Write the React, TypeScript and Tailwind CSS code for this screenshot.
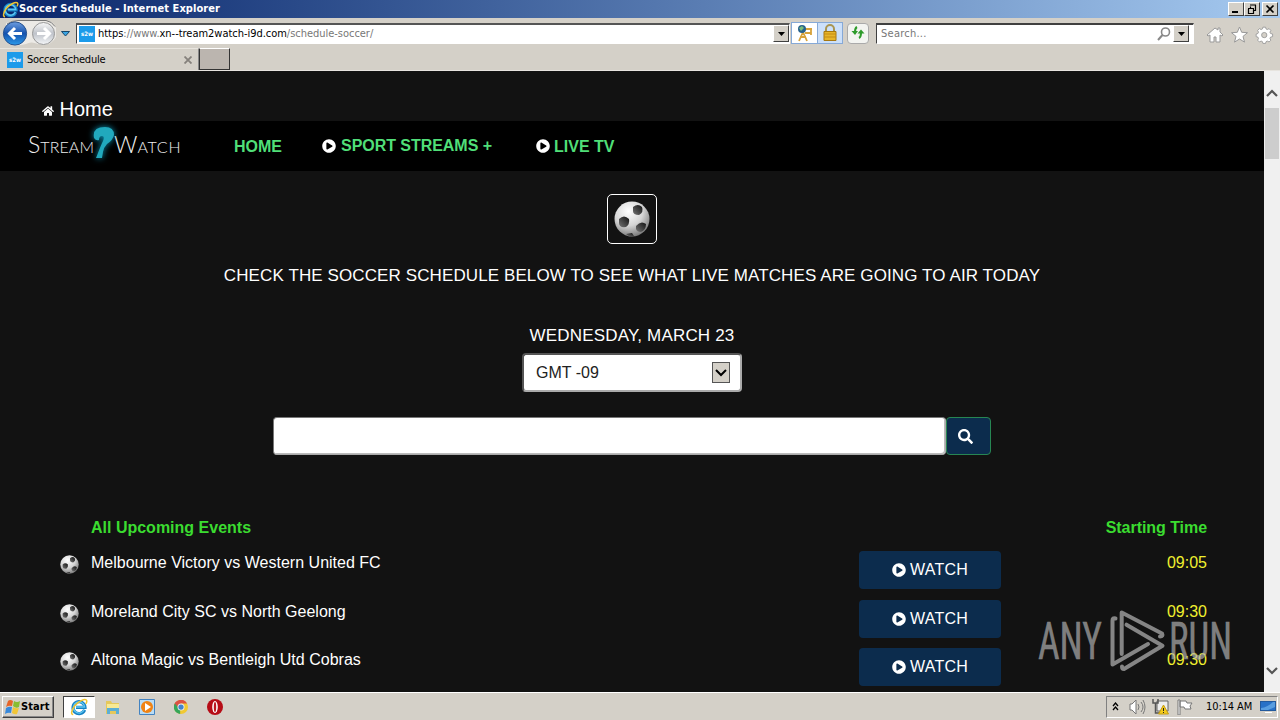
import type { ReactNode } from 'react'
import { FaHome, FaPlayCircle, FaSearch } from 'react-icons/fa'

const EVENTS = [
  { name: 'Melbourne Victory vs Western United FC', time: '09:05' },
  { name: 'Moreland City SC vs North Geelong', time: '09:30' },
  { name: 'Altona Magic vs Bentleigh Utd Cobras', time: '09:30' },
]

function IeLogo({ className }: { className: string }) {
  return (
    <svg viewBox="0 0 18 18" className={className} fill="none">
      <path d="M14.6 11.8A6 6 0 1 1 15 9.4H6" stroke="#1682c4" strokeWidth="3.2" />
      <path d="M14.2 11.6A5.6 5.6 0 1 1 14.6 9H6" stroke="#5fc6f2" strokeWidth="1.4" />
      <path d="M3.2 16.6C.4 16.6 1.6 11.500 5 7.500S14.500.4 16.300 2c.9.9.4 2.400-.5 3.800" stroke="#f0c531" strokeWidth="1.500" />
    </svg>
  )
}

function Favicon() {
  return (
    <span className="flex h-4 w-4 shrink-0 items-center justify-center bg-[#1c9bea] text-[6px] leading-none font-bold text-white">
      s2w
    </span>
  )
}

function SoccerBall({ className, id }: { className: string; id: string }) {
  return (
    <svg viewBox="0 0 36 36" className={className}>
      <defs>
        <radialGradient id={id} cx="40%" cy="28%" r="75%">
          <stop offset="0" stopColor="#fff" />
          <stop offset=".55" stopColor="#d5d5d5" />
          <stop offset="1" stopColor="#777" />
        </radialGradient>
        <linearGradient id={`${id}-patch`} x1="1" y1="0" x2="0" y2="1">
          <stop offset="0" stopColor="#111" />
          <stop offset="1" stopColor="#747474" />
        </linearGradient>
      </defs>
      <circle cx="18" cy="18" r="17.500" fill={`url(#${id})`} />
      <g fill={`url(#${id}-patch)`}>
        <path d="M19 6q5-4 9 0 2 5-3 8-6 0-6-4z" />
        <path d="M5 18q5-5 10 0 1 5-3 8-7 1-7-4z" />
        <path d="M22 25q5-6 10-2 0 6-5 8-4 0-5-3z" />
        <path d="M12 33l6-1 2 3-5 .4z" />
      </g>
    </svg>
  )
}

function DropArrow() {
  return (
    <span className="flex h-[17px] w-4 shrink-0 items-center justify-center border border-t-white border-r-[#404040] border-b-[#404040] border-l-white bg-[#d4d0c8]">
      <svg viewBox="0 0 7 4" className="h-1 w-[7px]">
        <path d="M0 0h7L3.500 4z" fill="#000" />
      </svg>
    </span>
  )
}

function WindowButton({ children }: { children: ReactNode }) {
  return (
    <span className="h-3.5 w-4 border border-t-white border-r-[#404040] border-b-[#404040] border-l-white bg-[#d4d0c8]">
      <svg viewBox="0 0 14 12" className="h-3 w-3.5" fill="none" stroke="#000">
        {children}
      </svg>
    </span>
  )
}

function TitleBar() {
  return (
    <div className="flex h-[18px] items-center bg-linear-to-r from-[#0a246a] to-[#a6caf0] pr-0.5 pl-0.5">
      <IeLogo className="h-[17px] w-[17px]" />
      <span className="mt-px text-[11px] font-bold tracking-[0.07px] text-white">Soccer Schedule - Internet Explorer</span>
      <div className="ml-auto flex">
        <WindowButton><path d="M3 9h6" strokeWidth="2" /></WindowButton>
        <WindowButton>
          <path d="M5 2h6M5.500 3.500V5M10.500 2v5.500H9M3 5.500h6M3.500 6v4.500h5V6" strokeWidth="1.200" />
        </WindowButton>
        <span className="w-0.5" />
        <WindowButton><path d="M3.500 2.500l7 7M10.500 2.500l-7 7" strokeWidth="1.700" /></WindowButton>
      </div>
    </div>
  )
}

function NavCircles() {
  return (
    <svg viewBox="0 0 74 30" className="h-[30px] w-[74px] shrink-0" fill="none">
      <defs>
        <linearGradient id="back" x1="0" y1="0" x2="0" y2="1">
          <stop offset="0" stopColor="#6d9de0" />
          <stop offset=".5" stopColor="#1552ae" />
          <stop offset="1" stopColor="#2c9bea" />
        </linearGradient>
        <linearGradient id="forward" x1="0" y1="0" x2="0" y2="1">
          <stop offset="0" stopColor="#f8f8f8" />
          <stop offset=".5" stopColor="#bfc3ca" />
          <stop offset="1" stopColor="#f4f6f8" />
        </linearGradient>
      </defs>
      <path d="M4 5Q14 1 24 3h22q6 1 8 7v9q-5 10-18 7-7-3-12 0Q9 30 4 23z" fill="#eceae6" />
      <path d="M5 6Q10 2.500 16 2.500h28q6 1 9 6" stroke="#777" />
      <circle cx="13" cy="15.500" r="11.600" fill="url(#back)" stroke="#26518f" />
      <path d="M20 15.500H8M13 10l-5.500 5.500L13 21" stroke="#fff" strokeWidth="3" />
      <circle cx="41.500" cy="15.500" r="11" fill="url(#forward)" stroke="#989898" />
      <path d="M35 15.500h12M42 10l5.500 5.500L42 21" stroke="#fff" strokeWidth="3" />
      <path d="M59.500 13.500h8L63.500 18z" fill="#3aa5e3" stroke="#17486c" />
    </svg>
  )
}

function AddressRow() {
  return (
    <div className="flex h-[30px] items-center pl-0.5">
      <NavCircles />
      <div className="flex h-[21px] w-[714px] shrink-0 items-center border border-t-2 border-t-[#555] border-r-white border-b-white border-l-[#404040] bg-white pl-0.5">
        <Favicon />
        <span className="mt-0.5 ml-[3px] text-[11px] tracking-[-0.03px] whitespace-nowrap text-[#777]">
          <span className="text-black">https</span>://www.<span className="text-black">xn--tream2watch-i9d.com</span>/schedule-soccer/
        </span>
        <span className="ml-auto"><DropArrow /></span>
      </div>
      <div className="ml-px flex h-[22px] w-[52px] shrink-0 border border-[#86a9d7]">
        <span className="flex w-[26px] items-center justify-center border-r border-[#86a9d7] bg-white">
          <svg viewBox="0 0 18 18" className="h-[18px] w-[18px]" fill="none">
            <path d="M7 8l-4 9M7 8l4 9M4 13h6M9 5h7M9 9h6M15 4v7" stroke="#d6a23b" strokeWidth="1.800" />
            <circle cx="6" cy="5" r="4" fill="#26618c" />
            <path d="M3 4l3-2 2 2-3 3z" fill="#79bd79" />
          </svg>
        </span>
        <span className="flex flex-1 items-center justify-center bg-[#cce0fa]">
          <svg viewBox="0 0 16 18" className="h-[18px] w-4" fill="none">
            <path d="M4 8V5a4 4 0 0 1 8 0v3" stroke="#a99552" strokeWidth="2" />
            <path d="M2 7.500h12v9H2z" fill="#e6b52c" stroke="#a67812" />
            <path d="M2 10h12M2 13h12" stroke="#c48b16" />
          </svg>
        </span>
      </div>
      <span className="ml-1 flex h-[21px] w-[22px] shrink-0 items-center justify-center rounded-sm border border-[#aaa] bg-[#f3f4f1]">
        <svg viewBox="0 0 16 16" className="h-4 w-4" fill="none" stroke="#2d9b2a" strokeWidth="2">
          <path d="M7 2Q5 3 5 7" />
          <path d="M1.500 6h6.500L5 10zM7.500 8.500h7L11 4.500z" fill="#2d9b2a" stroke="none" />
          <path d="M11 8q0 4-2 5" />
        </svg>
      </span>
      <div className="ml-[7px] flex h-[21px] w-[318px] shrink-0 items-center border border-t-2 border-t-[#404040] border-r-white border-b-white border-l-[#404040] bg-white pl-1 pr-1">
        <span className="mt-0.5 text-[11px] tracking-[0.25px] text-[#777]">Search...</span>
        <svg viewBox="0 0 14 14" className="mr-0.5 ml-auto h-3.5 w-3.5" fill="none" stroke="#888">
          <circle cx="8.500" cy="5" r="4" strokeWidth="1.600" />
          <path d="M5.500 8L1 13" strokeWidth="2" />
        </svg>
        <DropArrow />
      </div>
      <svg viewBox="0 0 72 20" className="mt-1 ml-3 h-5 w-[72px] shrink-0" fill="#fff" stroke="#999" strokeLinejoin="round">
        <path d="M1 10l8-7 3 2V3h2v4l3 3-1 1-2-1v7h-4v-5H8v5H4v-7l-2 1z" />
        <path d="M33.500 2l2.200 5.300 5.800.4-4.500 3.700 1.500 5.700-5-3.100-5 3.100 1.500-5.700-4.500-3.700 5.800-.4z" />
        <g transform="translate(7.200 .4) scale(.88)">
          <path d="M56.500 2h3l.5 2 1.500.7 2-1 2 2-1 2 .7 1.500 2.300.6v3l-2.300.5-.7 1.500 1 2-2 2-2-1-1.500.7-.5 2h-3l-.5-2-1.500-.7-2 1-2-2 1-2-.7-1.500-2-.5v-3l2-.6.7-1.500-1-2 2-2 2 1L56 4z" />
          <circle cx="58" cy="11" r="3" fill="#d4d0c8" />
        </g>
      </svg>
    </div>
  )
}

function TabRow() {
  return (
    <div className="flex h-[23px] border-b border-[#e7e4df]">
      <div className="flex w-[199px] items-center border-t border-r border-t-[#e8e5df] border-r-[#888] pr-1.5 pl-[7px]">
        <Favicon />
        <span className="mt-0.5 ml-1 text-[11px] tracking-[-0.25px] text-black">Soccer Schedule</span>
        <svg viewBox="0 0 8 8" className="ml-auto h-2 w-2" stroke="#85817c" strokeWidth="1.800">
          <path d="M.5.5l7 7M7.500.5l-7 7" />
        </svg>
      </div>
      <div className="h-[22px] w-[31px] border border-t-white border-r-[#333] border-b-[#333] border-l-[#333] bg-[#bbb5af]" />
    </div>
  )
}

function SiteLogo() {
  return (
    <div className="flex w-[152px] shrink-0 items-baseline pb-2.5 font-[Lato,sans-serif] text-[16px] leading-[30px] font-light text-[#eee]">
      <span className="text-[23px]">S</span>
      <span className="tracking-[0.1px]">TREAM</span>
      <svg viewBox="0 0 22 32" className="-mr-px -ml-px h-8 w-[22px] shrink-0 translate-y-[5px] overflow-visible drop-shadow-[0_0_3px_#0a93b4]" fill="none">
        <path d="M1 12Q-1 1 12 1q9 0 9 8-1 5-7 9-3 3-4 8l-1 6H3l2-5q3-8 5-12 2-5-1-5-3 0-3 4-3 1-5-2z" fill="#21a9bd" />
      </svg>
      <span className="text-[23px]">W</span>
      <span className="tracking-[0.7px]">ATCH</span>
    </div>
  )
}

function SiteHeader() {
  return (
    <>
      <div className="flex h-[50px] items-end gap-[5.500px] pb-[1px] pl-[42px] text-xl leading-[22px] text-white">
        <FaHome className="mb-[3px] h-3 w-3" />
        <span>Home</span>
      </div>
      <nav className="flex h-[50px] items-center bg-black pl-7 text-base font-bold text-[#50df78]">
        <SiteLogo />
        <span className="mt-px ml-[54px] w-[88px]">HOME</span>
        <span className="flex w-[214px] items-center gap-[5px] tracking-[-0.04px]">
          <FaPlayCircle className="-mt-px h-3.5 w-3.5 text-white" />SPORT STREAMS +
        </span>
        <span className="mt-px flex items-center gap-1">
          <FaPlayCircle className="-mt-px h-3.5 w-3.5 text-white" />LIVE TV
        </span>
      </nav>
    </>
  )
}

function Schedule() {
  return (
    <section className="flex flex-col items-center text-[17px] text-white">
      <div className="mt-[23px] flex h-[50px] w-[50px] items-center justify-center rounded-[5px] border border-white">
        <SoccerBall className="h-9 w-9" id="ball-main" />
      </div>
      <p className="mt-[21px] h-[22px] leading-[22px] tracking-[0.105px] whitespace-nowrap">
        CHECK THE SOCCER SCHEDULE BELOW TO SEE WHAT LIVE MATCHES ARE GOING TO AIR TODAY
      </p>
      <p className="mt-[38px] h-[22px] leading-[22px] tracking-[0.18px]">WEDNESDAY, MARCH 23</p>
      <div className="mt-[6px] flex h-[39px] w-[220px] items-center justify-between rounded border-2 border-[#555] border-r-[#aaa] border-b-[#aaa] bg-white pr-2.5 pl-3 text-base text-[#222]">
        <span>GMT -09</span>
        <span className="flex h-[21px] w-[18px] items-center justify-center border border-[#555] bg-[#d4d0c8]">
          <svg viewBox="0 0 12 8" className="h-2 w-3" fill="none" stroke="#000" strokeWidth="2">
            <path d="M1 1l5 5 5-5" />
          </svg>
        </span>
      </div>
      <div className="mt-[25px] flex h-[38px] w-[718px]">
        <div className="w-[673px] rounded border border-t-[#777] border-r-[#aaa] border-b-[#aaa] border-l-[#777] bg-white shadow-[inset_-1px_-1px_#bbb]" />
        <div className="flex w-[45px] items-center rounded border border-[#278653] bg-[#0c2c4d] pl-[11px]">
          <FaSearch className="h-[15px] w-[15px]" />
        </div>
      </div>
      <div className="mt-[62px] w-full pr-[57px] pl-[60px] text-base">
        <div className="mb-3 flex h-[22px] items-center justify-between pl-[31px] font-bold text-[#3bdc30]">
          <span>All Upcoming Events</span>
          <span className="tracking-[-0.05px]">Starting Time</span>
        </div>
        {EVENTS.map((event, i) => (
          <div key={event.name} className="flex h-[48.500px] leading-[22px]">
            <SoccerBall className="mt-[4px] mr-px h-[19px] w-[19px]" id={`ball-${i}`} />
            <span className="ml-[11px] w-[768px] pt-px tracking-[0.01px]">{event.name}</span>
            <span className="flex h-[38px] w-[142px] items-center justify-center gap-1 rounded bg-[#0c2c4d] tracking-[0.25px]">
              <FaPlayCircle className="h-3.5 w-3.5" />WATCH
            </span>
            <span className="ml-auto pt-px text-[#f0f02f]">{event.time}</span>
          </div>
        ))}
      </div>
    </section>
  )
}

function ScrollBar() {
  return (
    <div className="flex w-4 flex-col items-center bg-[#f0f0f0] pt-[18px] pb-[17px]">
      <svg viewBox="0 0 12 8" className="h-2 w-3 shrink-0" fill="none" stroke="#555" strokeWidth="2.200">
        <path d="M1 7l5-5 5 5" />
      </svg>
      <div className="mt-[11px] h-[51px] w-[14px] shrink-0 bg-[#cdcdcd]" />
      <svg viewBox="0 0 12 8" className="mt-auto h-2 w-3 shrink-0" fill="none" stroke="#555" strokeWidth="2.200">
        <path d="M1 1l5 5 5-5" />
      </svg>
    </div>
  )
}

function Watermark() {
  return (
    <svg viewBox="0 0 200 64" className="absolute top-[538px] left-[1038px] h-16 w-[200px]">
      <g className="font-[Roboto,sans-serif]" fill="#b8b8b8" fillOpacity=".68" stroke="#858585" strokeWidth=".5" fontSize="51">
        <text x="0" y="50" textLength="64" lengthAdjust="spacingAndGlyphs">ANY</text>
        <text x="131" y="50" textLength="63" lengthAdjust="spacingAndGlyphs">RUN</text>
      </g>
      <g fill="none" stroke="#858585" strokeWidth="4" strokeLinecap="round" strokeLinejoin="round">
        <path d="M83.700 45V3.500l40.300 21q1.500 3-2 3" />
        <path d="M88.500 15.700l36 21L86 60q-2 0-2-2.500" />
        <path d="M77.500 9.500q-3-1-3 2v44L110 35" />
      </g>
    </svg>
  )
}

function Taskbar() {
  return (
    <div className="flex h-7 items-center border-t border-white bg-[#d4d0c8] pr-0.5 pl-0.5 text-[11px] text-black">
      <div className="flex h-[22px] w-[52px] items-center border border-t-white border-r-[#404040] border-b-[#404040] border-l-white pl-0.5 shadow-[inset_-1px_-1px_#888]">
        <svg viewBox="0 0 16 16" className="h-4 w-4 shrink-0">
          <path d="M3 2Q5 0 8 2L7 7Q4 6 1 8z" fill="#e66528" />
          <path d="M9 2q3 2 6 0l-1 6q-3 2-6-1z" fill="#88bd31" />
          <path d="M1 9q3-2 6-1l-1 6q-3-1-6 1z" fill="#3789db" />
          <path d="M8 8q3 2 6 1l-2 6q-2 1-5-1z" fill="#f1c637" />
        </svg>
        <b className="mt-0.5 tracking-[0.1px]">Start</b>
      </div>
      <div className="ml-[9px] flex h-[22px] w-8 items-center justify-center border border-t-[#404040] border-r-white border-b-white border-l-[#404040] bg-white">
        <IeLogo className="h-[18px] w-[18px]" />
      </div>
      <svg viewBox="0 0 16 16" className="ml-2.5 h-4 w-4">
        <path d="M1 2h5l1 2h7v11H1z" fill="#e5c85c" />
        <path d="M2 5h12v5H2z" fill="#f8e994" />
        <path d="M2 15V9h12v6h-3v-3H5v3z" fill="#5caed5" />
      </svg>
      <svg viewBox="0 0 16 16" className="ml-[18px] h-4 w-4">
        <path d="M.5.5h15v15H.5z" fill="#b9dcf5" stroke="#4383c1" />
        <circle cx="8" cy="8" r="6" fill="#f08314" />
        <path d="M6 4l6 4-6 4z" fill="#fff" />
      </svg>
      <svg viewBox="0 0 16 16" className="ml-[19px] h-3.5 w-3.5">
        <circle cx="8" cy="8" r="8" fill="#f1c932" />
        <path d="M8 8H0A8 8 0 0 1 15 4H8z" fill="#dc5143" />
        <path d="M1 4l6 7v5A8 8 0 0 1 1 4z" fill="#36a65a" />
        <circle cx="8" cy="8" r="4" fill="#eee" />
        <circle cx="8" cy="8" r="3" fill="#4283ce" />
      </svg>
      <svg viewBox="0 0 16 16" className="ml-[19px] h-4 w-4">
        <circle cx="8" cy="8" r="8" fill="#b60c16" />
        <ellipse cx="8" cy="8" rx="2.800" ry="6" fill="#fff" />
        <ellipse cx="8" cy="8" rx="1.200" ry="5" fill="#bd1720" />
      </svg>
      <div className="ml-auto flex h-[22px] w-[172px] items-center border border-t-[#808080] border-r-white border-b-white border-l-[#808080] pl-[5px]">
        <svg viewBox="0 0 7 9" className="h-[9px] w-[7px]" fill="none" stroke="#000" strokeWidth="1.300">
          <path d="M1 4l2.500-3L6 4M1 8l2.500-3L6 8" />
        </svg>
        <svg viewBox="0 0 17 16" className="ml-2.5 h-4 w-[17px]" fill="#fff" stroke="#777">
          <path d="M1 5h2l4-4v14l-4-4H1z" />
          <path d="M9 5q2 3 0 6M12 3q4 5 0 10M14 1q4 7 0 14" fill="none" />
        </svg>
        <svg viewBox="0 0 17 17" className="ml-[6px] h-[17px] w-[17px]" fill="none">
          <path d="M5 3h11v10H5z" fill="#eee" stroke="#666" />
          <path d="M1 1v4h5V1M3.500 5v10H8" stroke="#555" strokeWidth="1.500" />
          <path d="M11.500 7l5 9h-10z" fill="#f4cb1c" stroke="#c49c12" />
          <path d="M11.500 10v3M11.500 14v1" stroke="#222" />
        </svg>
        <svg viewBox="0 0 16 16" className="ml-2 h-4 w-4" fill="#fff" stroke="#777">
          <path d="M1 1h2v15H1zM3 2h6l1 2h5l-2 3 1 3H8L7 8H3z" />
        </svg>
        <span className="mt-0.5 ml-[13px] tracking-[-0.1px] whitespace-nowrap">10:14 AM</span>
        <svg viewBox="0 0 16 14" className="ml-auto mr-px h-3.5 w-4 shrink-0">
          <path d="M0 1h16v10H0z" fill="#235a9d" />
          <path d="M1 2h14v8H1z" fill="#2871c7" />
          <path d="M1 8Q8 7 13 2h2v5L8 10H1z" fill="#599ee0" />
          <path d="M5 12h7v1H5z" fill="#fff" />
        </svg>
      </div>
    </div>
  )
}

export default function App() {
  return (
    <div className="flex h-[720px] w-[1280px] flex-col overflow-hidden bg-[#d4d0c8] font-['DejaVu_Sans_Condensed','DejaVu_Sans',sans-serif] font-stretch-condensed">
      <TitleBar />
      <AddressRow />
      <TabRow />
      <div className="relative flex h-[621px] shrink-0 overflow-hidden bg-[#121212] font-['Liberation_Sans',Arial,sans-serif]">
        <main className="w-[1264px]">
          <SiteHeader />
          <Schedule />
        </main>
        <ScrollBar />
        <Watermark />
      </div>
      <Taskbar />
    </div>
  )
}
